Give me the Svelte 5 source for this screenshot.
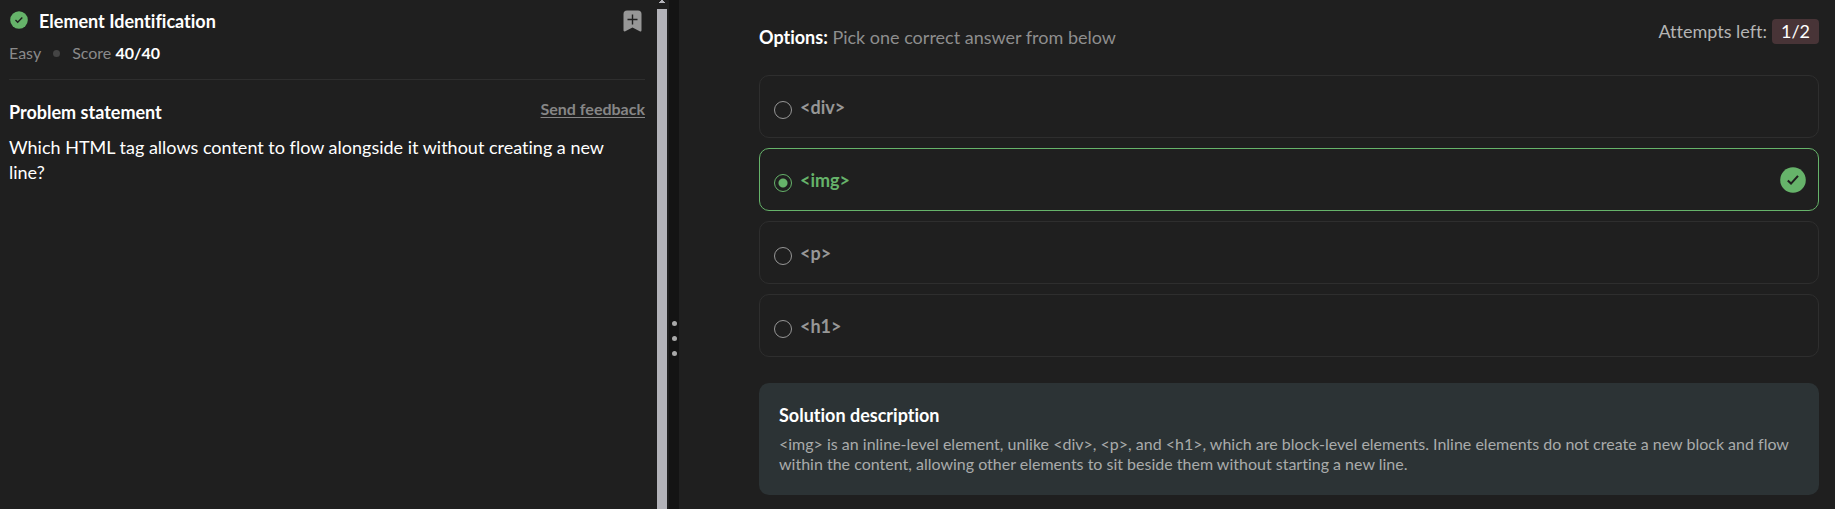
<script>
  const options = ['<div>', '<img>', '<p>', '<h1>'];
  const correct = '<img>';
  let selected = $state('<img>');
</script>

<div class="page">
  <section class="problem">
    <div class="content">
      <header>
        <div class="title-row">
          <svg class="badge" width="18" height="18" viewBox="0 0 18 18" aria-hidden="true">
            <circle cx="9" cy="9" r="8.8" fill="#66b36a" />
            <path d="M5.5 9.1 7.7 11.2 12.3 6.6" fill="none" stroke="#1f1f1f" stroke-width="1.4" />
          </svg>
          <h1>Element Identification</h1>
          <button class="bookmark" aria-label="Bookmark">
            <svg width="20" height="22" viewBox="0 0 20 22" aria-hidden="true">
              <path d="M4 .5h11a3.5 3.5 0 0 1 3.5 3.5v16.2c0 1.1-.9 1.6-1.8 1L9.5 17.5l-7.2 3.7c-.9.5-1.8 0-1.8-1V4A3.5 3.5 0 0 1 4 .5Z" fill="#979797" />
              <path d="M9.5 4.5v10M4.5 9.5h10" stroke="#1f1f1f" stroke-width="1.4" />
            </svg>
          </button>
        </div>
        <div class="meta">
          <span>Easy</span>
          <span class="dot"></span>
          <span>Score <b>40/40</b></span>
        </div>
      </header>
      <div class="statement-head">
        <h2>Problem statement</h2>
        <a href="#feedback">Send feedback</a>
      </div>
      <p class="statement">Which HTML tag allows content to flow alongside it without creating a new line?</p>
    </div>
    <div class="scrollbar" aria-hidden="true">
      <svg width="10" height="9" viewBox="0 0 10 9"><path d="M4 0h2v1h1v1h1v1H2V2h1V1h1Z" fill="#b3b3b9" /></svg>
      <div class="thumb"></div>
    </div>
  </section>

  <div class="splitter" role="separator" aria-orientation="vertical">
    <i></i><i></i><i></i>
  </div>

  <section class="answers">
    <div class="answers-head">
      <p class="prompt"><b>Options:</b> Pick one correct answer from below</p>
      <p class="attempts">Attempts left: <span>1/2</span></p>
    </div>
    <div class="options">
      {#each options as option}
        <label class:picked={selected === option}>
          <input type="radio" name="answer" value={option} bind:group={selected} />
          <span>{option}</span>
          {#if selected === option && option === correct}
            <svg width="26" height="26" viewBox="0 0 26 26" aria-hidden="true">
              <circle cx="13" cy="13" r="12.8" fill="#66b36a" />
              <path d="M7.8 13.6 11 16.6 18 8.9" fill="none" stroke="#1f1f1f" stroke-width="2.1" />
            </svg>
          {/if}
        </label>
      {/each}
    </div>
    <div class="solution">
      <h2>Solution description</h2>
      <p>&lt;img&gt; is an inline-level element, unlike &lt;div&gt;, &lt;p&gt;, and &lt;h1&gt;, which are block-level elements. Inline elements do not create a new block and flow within the content, allowing other elements to sit beside them without starting a new line.</p>
    </div>
  </section>
</div>

<style>
  :global(body) {
    background: #1f1f1f;
  }
  .page {
    display: grid;
    grid-template-columns: minmax(0, 669fr) 10px minmax(0, 1156fr);
    min-height: 100vh;
    background: #1f1f1f;
    color: #fff;
    font-family: Lato, "Open Sans", sans-serif;
    font-size: 18px;
    line-height: 25px;
    font-variant-ligatures: none;
  }
  h1, h2, p {
    margin: 0;
    font-size: 18px;
    line-height: 25px;
  }
  h1, h2, b {
    font-weight: 700;
  }
  .problem {
    display: flex;
  }
  .content {
    flex: 1;
    min-width: 0;
    padding: 9px 12px 0 9px;
  }
  header {
    padding-bottom: 14px;
    border-bottom: 1px solid #2e2e2e;
  }
  .title-row {
    display: flex;
    align-items: flex-start;
    gap: 11px;
  }
  .badge {
    margin: 2px 0 0 1px;
  }
  h1 {
    flex: 1;
  }
  .bookmark {
    display: flex;
    padding: 0;
    margin: 1px 2px 0 0;
    border: 0;
    background: none;
    cursor: pointer;
  }
  .meta {
    display: flex;
    align-items: center;
    gap: 12px;
    margin-top: 7px;
    font-size: 16px;
    line-height: 24px;
    color: #8a8a8a;
  }
  .meta b {
    color: #fff;
  }
  .dot {
    width: 7px;
    height: 7px;
    border-radius: 50%;
    background: #444;
  }
  .statement-head {
    display: flex;
    justify-content: space-between;
    margin-top: 19px;
  }
  .statement-head h2 {
    padding-top: 1px;
  }
  a {
    color: #868686;
    font-size: 16px;
    line-height: 20px;
    font-weight: 700;
    text-underline-offset: 2px;
  }
  .statement {
    margin-top: 10px;
    padding-right: 16px;
  }
  .scrollbar {
    width: 12px;
    display: flex;
    flex-direction: column;
  }
  .scrollbar svg {
    display: block;
  }
  .thumb {
    flex: 1;
    width: 10px;
    background: #b3b3b9;
  }
  .splitter {
    display: flex;
    flex-direction: column;
    align-items: center;
    justify-content: center;
    gap: 10px;
    padding-top: 168px;
    box-sizing: border-box;
    background: #141414;
    cursor: col-resize;
  }
  .splitter i {
    width: 5px;
    height: 5px;
    border-radius: 50%;
    background: #aaa;
  }
  .answers {
    padding: 19px 16px 14px 80px;
  }
  .answers-head {
    display: flex;
    justify-content: space-between;
    align-items: flex-start;
    margin-bottom: 25px;
  }
  .prompt {
    padding-top: 6px;
    color: #8e8e8e;
  }
  .prompt b {
    color: #fff;
  }
  .attempts {
    display: flex;
    gap: 5px;
    color: #b4b4b4;
  }
  .attempts span {
    padding: 0 9px;
    border-radius: 4px;
    background: #483437;
    color: #fff;
  }
  .options {
    display: flex;
    flex-direction: column;
    gap: 10px;
  }
  label {
    display: flex;
    align-items: center;
    min-height: 63px;
    box-sizing: border-box;
    padding: 1px 12px 0 14px;
    border: 1px solid #2e2e2e;
    border-radius: 10px;
    color: #979797;
    font-weight: 700;
    cursor: pointer;
  }
  label span {
    flex: 1;
    margin-left: 8px;
  }
  label.picked {
    border-color: #66b36a;
    color: #66b36a;
  }
  input {
    appearance: none;
    box-sizing: border-box;
    width: 18px;
    height: 18px;
    margin: 5px 0 0;
    border: 1px solid currentColor;
    border-radius: 50%;
    color: inherit;
  }
  input:checked {
    background: radial-gradient(circle, currentColor 4px, transparent 5px);
  }
  .solution {
    margin-top: 26px;
    padding: 20px;
    border-radius: 10px;
    background: #2c3335;
  }
  .solution p {
    margin-top: 6px;
    padding-bottom: 1px;
    font-size: 16px;
    line-height: 20px;
    color: #a9abab;
  }
</style>
